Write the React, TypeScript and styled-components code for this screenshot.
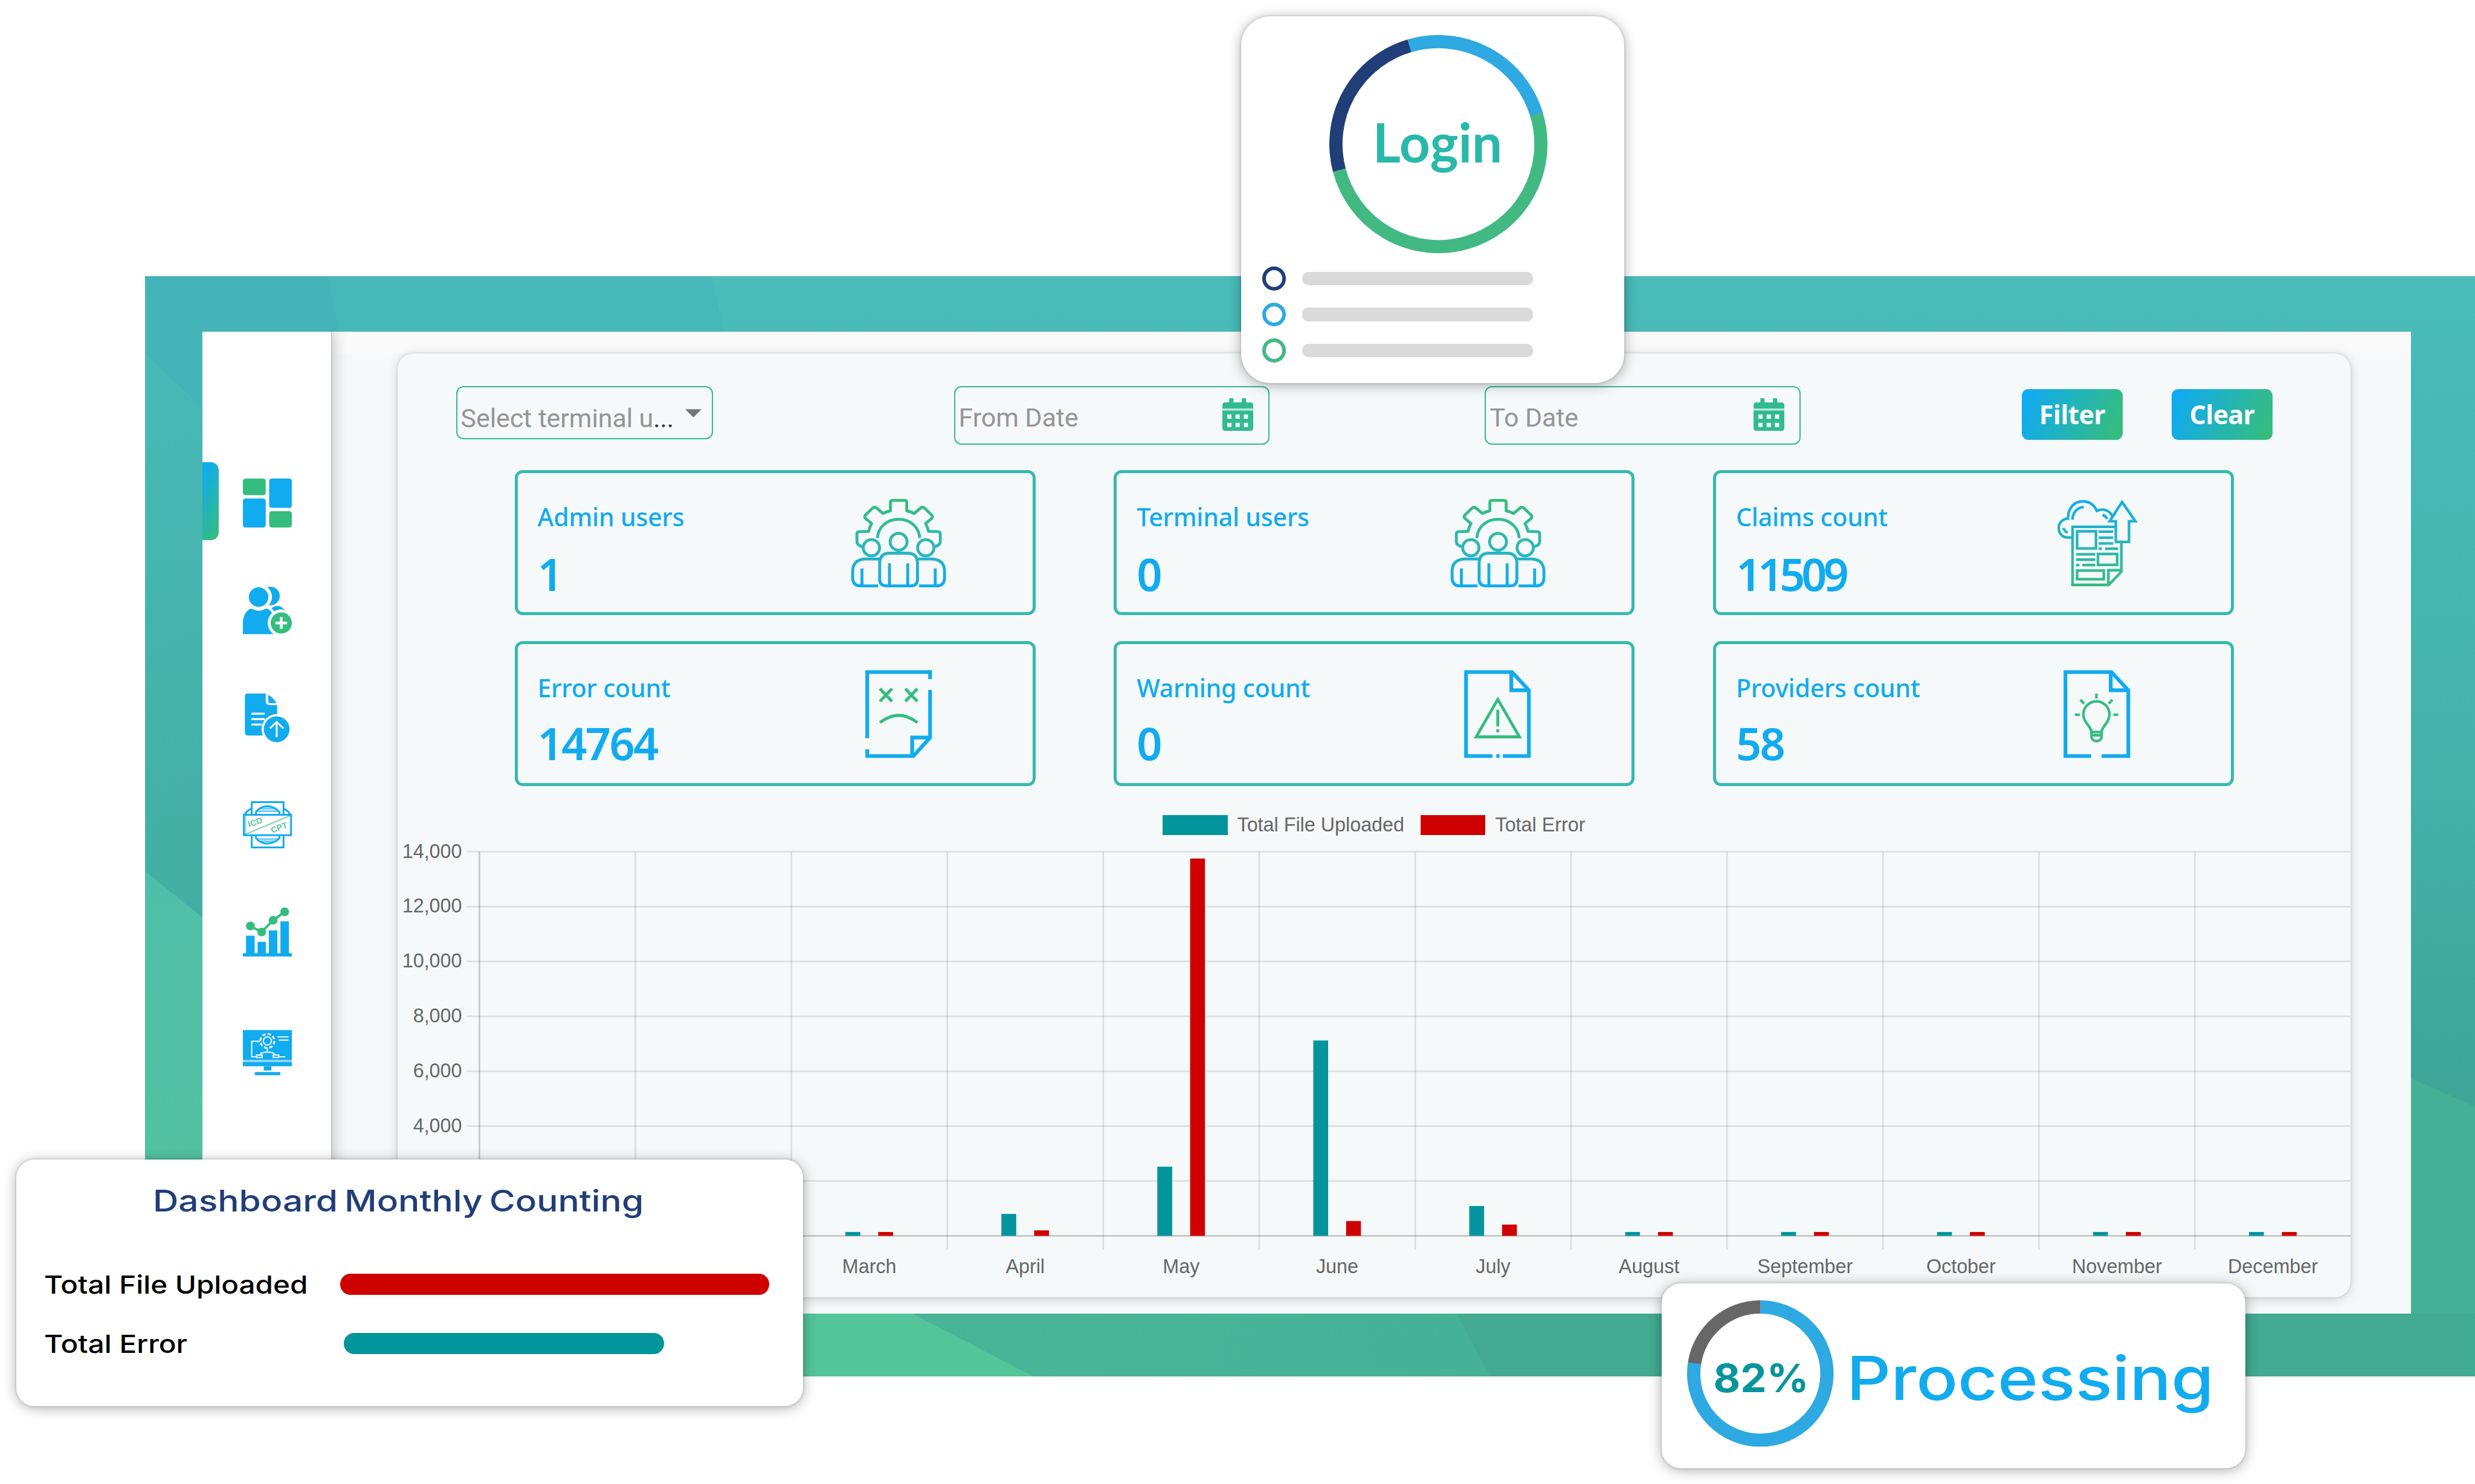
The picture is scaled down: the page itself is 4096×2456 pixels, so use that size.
import React from "react";
import styled, { createGlobalStyle } from "styled-components";

const palette = {
  blue: "#11abef",
  sky: "#2ea9e1",
  navy: "#213e79",
  green: "#35bd80",
  leaf: "#42b983",
  mint: "#30bb90",
  cardLine: "#36b9ae",
  teal: "#03959b",
  red: "#cf0000",
  login: "#29b9aa",
  surface: "#f5f9fa",
  grey: "#dadada",
  chartText: "#666666",
};

const GlobalStyle = createGlobalStyle`
  * {
    box-sizing: border-box;
  }

  body {
    margin: 0;
    background: #ffffff;
  }
`;

const Stage = styled.main`
  position: relative;
  width: 4096px;
  height: 2456px;
  padding: 457px 0 0 240px;
  overflow: hidden;
  background: #ffffff;
`;

const Frame = styled.section`
  position: relative;
  isolation: isolate;
  width: 3856px;
  height: 1821px;
  padding: 92px 106.5px 104px 94.5px;
`;

const FrameArt = styled.svg`
  position: absolute;
  inset: 0;
  width: 100%;
  height: 100%;
`;

const Screen = styled.div`
  position: relative;
  display: flex;
  width: 3655px;
  height: 1625px;
  overflow: hidden;
  background: ${palette.surface};
`;

const Sidebar = styled.nav`
  position: relative;
  z-index: 1;
  display: flex;
  flex-direction: column;
  width: 215.5px;
  height: 100%;
  padding: 216px 0 0;
  background: #ffffff;
  border-right: 2.7px solid #c3c4c5;
  box-shadow: 6px 0 22px rgba(0, 0, 0, 0.17);
`;

const NavItem = styled.a<{ gap?: number }>`
  display: flex;
  align-items: center;
  height: 129px;
  margin-bottom: ${(props) => props.gap ?? 48.6}px;
`;

const ActiveMark = styled.span<{ on?: boolean }>`
  width: 27px;
  height: 129px;
  border-radius: 0 13px 13px 0;
  background: ${(props) =>
    props.on
      ? `linear-gradient(118deg, ${palette.blue} 10%, ${palette.green} 92%)`
      : "transparent"};
`;

const NavIcon = styled.svg`
  width: 81px;
  height: 81px;
  margin: 6px 0 0 40px;
  overflow: visible;
`;

const Main = styled.div`
  width: 3439.5px;
  padding: 36px 0 0 108px;
  background: linear-gradient(#fafafa 36px, ${palette.surface} 36px);
`;

const Panel = styled.div`
  width: 3232px;
  height: 1562px;
  padding-top: 53.5px;
  border-radius: 26px;
  background: ${palette.surface};
  box-shadow: 0 3px 18px rgba(0, 0, 0, 0.17), 0 0 4px rgba(0, 0, 0, 0.14);
`;

const Filters = styled.div`
  display: flex;
  align-items: flex-start;
  height: 97px;
  padding-left: 96.5px;
`;

const Field = styled.div<{ w: number; h: number; gap: number }>`
  display: flex;
  width: ${(props) => props.w}px;
  height: ${(props) => props.h}px;
  margin-right: ${(props) => props.gap}px;
  padding-left: 6px;
  border: 2.7px solid ${palette.mint};
  border-radius: 12px;
  font: 400 43px/50px Roboto, sans-serif;
  letter-spacing: -0.1px;
  color: #959595;
`;

const FieldText = styled.span<{ top: number }>`
  flex: 1;
  padding-top: ${(props) => props.top}px;
  white-space: nowrap;
`;

const Ellipsis = styled.span`
  color: #333333;
`;

const Caret = styled.svg`
  width: 27px;
  height: 14px;
  margin: 36px 17px 0 0;
`;

const CalendarIcon = styled.svg`
  width: 51px;
  height: 54px;
  margin: 18.5px 25px 0 0;
`;

const Button = styled.button<{ gap?: number }>`
  width: 167px;
  height: 83.5px;
  margin: 5.5px ${(props) => props.gap ?? 0}px 0 0;
  padding: 0;
  border: 0;
  border-radius: 11px;
  background: linear-gradient(112deg, ${palette.blue} 8%, ${palette.green} 92%);
  font: 700 43px/82px "Open Sans", sans-serif;
  letter-spacing: -0.7px;
  color: #ffffff;
`;

const Cards = styled.div`
  display: grid;
  grid-template-columns: repeat(3, 862px);
  grid-auto-rows: 240px;
  gap: 43px 129.7px;
  margin: 42.7px 0 0 193.6px;
`;

const Card = styled.article`
  display: flex;
  border: 5.4px solid ${palette.cardLine};
  border-radius: 13px;
  color: ${palette.blue};
  font-family: "Noto Sans", "Open Sans", sans-serif;
`;

const CardText = styled.div`
  width: 552.4px;
  padding: 43.5px 0 0 33px;
`;

const CardLabel = styled.div`
  font-size: 41px;
  font-weight: 500;
  line-height: 56px;
  letter-spacing: -0.2px;
`;

const CardValue = styled.div<{ top: number; tracking?: number }>`
  margin-top: ${(props) => props.top}px;
  font-size: 74px;
  font-weight: 600;
  line-height: 100px;
  letter-spacing: ${(props) => props.tracking ?? -2.7}px;
`;

const CardIcon = styled.div`
  display: flex;
  justify-content: center;
  width: 156px;
  padding-top: 43px;

  svg {
    height: 145.5px;
    overflow: visible;
  }
`;

const Legend = styled.div`
  display: flex;
  align-items: center;
  height: 32.4px;
  margin: 48px 0 0 1266px;
  font: 32.3px/32.4px "Liberation Sans", Arial, sans-serif;
  color: ${palette.chartText};
`;

const Swatch = styled.span<{ color: string }>`
  width: 107.5px;
  height: 32.4px;
  margin-right: 16px;
  background: ${(props) => props.color};
`;

const LegendText = styled.span`
  margin-right: 27px;
`;

const ChartSvg = styled.svg`
  display: block;
  width: 3232px;
  height: 765px;
  font: 32.3px "Liberation Sans", Arial, sans-serif;
`;

const Popup = styled.aside<{
  x: number;
  y: number;
  w: number;
  h: number;
  radius: number;
}>`
  position: absolute;
  left: ${(props) => props.x}px;
  top: ${(props) => props.y}px;
  width: ${(props) => props.w}px;
  height: ${(props) => props.h}px;
  border-radius: ${(props) => props.radius}px;
  background: #ffffff;
  box-shadow: 0 3px 22px rgba(0, 0, 0, 0.32), 0 0 4px rgba(0, 0, 0, 0.2);
`;

const Ring = styled.svg<{ size: number }>`
  display: block;
  width: ${(props) => props.size}px;
  height: ${(props) => props.size}px;
`;

const LoginRing = styled.div`
  padding: 31px 0 0 146px;
`;

const Skeleton = styled.div`
  display: flex;
  align-items: center;
  height: 59.7px;
  padding-left: 34.5px;
`;

const SkeletonList = styled.div`
  margin-top: 12px;
`;

const Dot = styled.span<{ color: string }>`
  width: 39.5px;
  height: 39.5px;
  margin-right: 26.5px;
  border: 6.6px solid ${(props) => props.color};
  border-radius: 50%;
`;

const Line = styled.span`
  width: 382.6px;
  height: 22.4px;
  border-radius: 10px;
  background: ${palette.grey};
`;

// Inter stretched sideways to get the wide look of the popups
const Wide = styled.span<{ stretch: number }>`
  display: inline-block;
  transform: scaleX(${(props) => props.stretch});
  transform-origin: left center;
  white-space: nowrap;
`;

const CountTitle = styled.h2`
  margin: 0;
  padding: 38px 0 0 226px;
  font: 500 50px/60px Inter, sans-serif;
  word-spacing: -4px;
  color: ${palette.navy};
`;

const CountRow = styled.div<{ top: number }>`
  display: flex;
  align-items: center;
  height: 50px;
  margin-top: ${(props) => props.top}px;
  padding-left: 46px;
  font: 500 41px/50px Inter, sans-serif;
  color: #000000;
`;

const CountLabel = styled.span<{ w: number }>`
  width: ${(props) => props.w}px;
`;

const CountBar = styled.span<{ w: number; color: string }>`
  width: ${(props) => props.w}px;
  height: 34.8px;
  border-radius: 17px;
  background: ${(props) => props.color};
`;

const ProcessBody = styled.div`
  display: flex;
  padding: 27.5px 0 0 42px;
`;

const ProcessText = styled.span`
  margin: 69px 0 0 21px;
  font: 500 100px/120px Inter, sans-serif;
  color: ${palette.blue};
`;

const RingText = styled.text`
  text-anchor: middle;
`;

interface Segment {
  from: number;
  to: number;
  color: string;
}

interface DonutProps {
  size: number;
  thickness: number;
  segments: Segment[];
  children?: React.ReactNode;
}

const arcPath = (c: number, r: number, from: number, to: number) => {
  const point = (deg: number) => {
    const a = ((deg - 90) * Math.PI) / 180;
    return `${c + r * Math.cos(a)} ${c + r * Math.sin(a)}`;
  };
  const large = to - from > 180 ? 1 : 0;

  return `M${point(from)} A${r} ${r} 0 ${large} 1 ${point(to)}`;
};

const Donut: React.FC<DonutProps> = ({
  size,
  thickness,
  segments,
  children,
}) => (
  <Ring size={size} viewBox={`0 0 ${size} ${size}`}>
    {segments.map((s) => (
      <path
        key={s.from}
        d={arcPath(size / 2, (size - thickness) / 2, s.from, s.to)}
        fill="none"
        stroke={s.color}
        strokeWidth={thickness}
      />
    ))}
    {children}
  </Ring>
);

const DashboardIcon = () => (
  <NavIcon viewBox="0 0 30 30">
    <rect width="14" height="10.2" rx="1.6" fill={palette.green} />
    <rect x="16.1" width="13.9" height="18" rx="1.6" fill={palette.blue} />
    <rect y="12.2" width="14" height="17.8" rx="1.6" fill={palette.blue} />
    <rect
      x="16.1"
      y="20"
      width="13.9"
      height="10"
      rx="1.6"
      fill={palette.green}
    />
  </NavIcon>
);

const UsersIcon = () => (
  <NavIcon viewBox="0 0 30 30">
    <circle cx="16.9" cy="6.1" r="5.7" fill={palette.blue} />
    <path
      d="M17.5 13.6 Q22 10 26 15 L20 16 Z"
      fill={palette.blue}
    />
    <circle cx="10.2" cy="6.6" r="7.6" fill="#ffffff" />
    <circle cx="9.6" cy="6.7" r="6" fill={palette.blue} />
    <path
      d="M0 29.4 V22.6 C0 18 2 15 5 13.7 Q9.6 16.4 14.4 13.7 C17 14.6 18.5 16.6 19 19 V29.4 Z"
      fill={palette.blue}
    />
    <circle cx="23.5" cy="22.6" r="8.3" fill="#ffffff" />
    <circle cx="23.5" cy="22.6" r="6.5" fill={palette.green} />
    <path d="M23.5 19 V26.2 M19.9 22.6 H27.1" stroke="#ffffff" strokeWidth="1.7" />
  </NavIcon>
);

const UploadIcon = () => (
  <NavIcon viewBox="0 0 30 30">
    <path
      d="M3 .3 H14 V5 Q14 7.4 16.5 7.4 H21 V26 H3 Q1.2 26 1.2 24 V2.2 Q1.2 .3 3 .3 Z"
      fill={palette.blue}
    />
    <path d="M15.5 1 Q18.5 2.6 20.6 6.2 H17 Q15.5 6.2 15.5 4.8 Z" fill={palette.blue} />
    <path
      d="M5.2 12.6 H13.4 M5.2 16 H13.4 M5.2 19.3 H11.5"
      stroke="#ffffff"
      strokeWidth="1.2"
    />
    <circle cx="20.7" cy="22.2" r="9.3" fill="#ffffff" />
    <circle cx="20.7" cy="22.2" r="7.9" fill={palette.blue} />
    <path
      d="M20.7 27 V17.9 M16.6 21.6 L20.7 17.7 L24.8 21.6"
      fill="none"
      stroke="#ffffff"
      strokeWidth="1.1"
    />
  </NavIcon>
);

const CodesIcon = () => (
  <NavIcon viewBox="0 0 30 30">
    <g fill="none" stroke={palette.blue} strokeWidth="1.1">
      <path d="M5.4 9 V.9 H24.9 V9 M5.4 21 V28.7 H24.9 V21" />
      <path d="M1 8.6 Q2.6 6 5.2 5 M25 5 Q27.6 6 29 8.6" />
      <path
        d="M8 8.6 V7 Q10.5 3.6 15 3.4 Q19.5 3.6 22.4 7 V8.6 M8 21.4 V23 Q10.5 26.2 15 26.4 Q19.5 26.2 22.4 23 V21.4"
      />
      <path
        d="M8.6 6.5 H22 M10.4 4.9 H19.6 M8.6 23.6 H22 M10.4 25 H19.6"
        opacity="0.6"
      />
      <rect x=".6" y="8.7" width="28.9" height="12.5" fill="#ffffff" />
      <path d="M1.6 9 V21" opacity="0.4" />
    </g>
    <path d="M1.2 20.8 L29 9.2" stroke={palette.green} strokeWidth="0.7" opacity="0.7" />
    <g
      fill={palette.green}
      opacity="0.8"
      fontFamily="Liberation Sans, Arial, sans-serif"
      fontSize="5.2"
      fontWeight="700"
    >
      <text transform="translate(3.9 16.4) rotate(-20)">ICD</text>
      <text transform="translate(17.9 20) rotate(-20)">CPT</text>
    </g>
  </NavIcon>
);

const ReportIcon = () => (
  <NavIcon viewBox="0 0 30 30">
    <path
      d="M1.9 28 V17.2 H7.2 V28 H9 V21 H14.1 V28 H15.9 V14 H21.1 V28 H23 V8.4 H28.2 V28 H30 V30 H0 V28 Z"
      fill={palette.blue}
    />
    <path
      d="M4.6 11.3 L11.5 15 L18.5 7.8 L25.6 2.6"
      fill="none"
      stroke={palette.green}
      strokeWidth="1.5"
    />
    <g fill={palette.green}>
      <circle cx="4.6" cy="11.3" r="2.7" />
      <circle cx="11.5" cy="15" r="2.7" />
      <circle cx="18.5" cy="7.8" r="2.7" />
      <circle cx="25.6" cy="2.6" r="2.7" />
    </g>
  </NavIcon>
);

const MonitorIcon = () => (
  <NavIcon viewBox="0 0 30 30">
    <rect y="1" width="30" height="18.4" fill={palette.blue} />
    <rect y="19.4" width="30" height="1.2" fill="#8fd6f6" />
    <rect y="20.6" width="30" height="2.6" fill={palette.blue} />
    <circle cx="1.6" cy="21.9" r="0.6" fill={palette.green} />
    <rect x="12.8" y="23.2" width="4.6" height="2.6" fill={palette.blue} />
    <rect x="7.2" y="26.8" width="15.8" height="1.9" rx=".6" fill={palette.blue} />
    <g fill="none" stroke="#ffffff" strokeWidth="0.8" opacity="0.9">
      <circle cx="15" cy="7.7" r="2.5" />
      <circle cx="15" cy="7.7" r="4.3" strokeDasharray="2.1 1.28" strokeWidth="1.2" />
      <path d="M10.4 7.9 H5.4 V17.4 H8" />
      <path d="M15 12 V14.5 M10.2 16.6 Q11 14.5 15 14.5 Q19 14.5 20 16.6 M22.5 17.4 H26" />
      <path d="M21.2 5.2 H28 M22 7.2 H28" />
      <rect x="8.4" y="16.3" width="3.4" height="1.5" />
      <rect x="18.6" y="16.3" width="3.4" height="1.5" />
    </g>
  </NavIcon>
);

const navIcons = [
  { icon: <DashboardIcon />, on: true },
  { icon: <UsersIcon /> },
  { icon: <UploadIcon /> },
  { icon: <CodesIcon /> },
  { icon: <ReportIcon />, gap: 71 },
  { icon: <MonitorIcon /> },
];

const TeamIcon: React.FC<{ id: string }> = ({ id }) => (
  <svg viewBox="0 0 58 54">
    <defs>
      <linearGradient
        id={id}
        gradientUnits="userSpaceOnUse"
        x1="0"
        y1="4"
        x2="0"
        y2="52"
      >
        <stop offset="0" stopColor="#36bd80" />
        <stop offset="0.5" stopColor="#2fb8b4" />
        <stop offset="1" stopColor="#11abef" />
      </linearGradient>
    </defs>
    <g
      fill="none"
      stroke={`url(#${id})`}
      strokeWidth="1.8"
      strokeLinejoin="round"
    >
      <path
        d="M7 29.2 Q3.4 28.6 3.4 26 V21.4 Q3.4 20 5 20 L10.6 19.8 Q11.2 17.2 12.4 15 L8.6 11.8 Q7.8 10.9 8.6 9.8 L13.2 5.4 Q14.4 4.6 15.4 5.4 L19.4 8.8 Q21.6 7.7 24 7.2 V2 Q24 .8 25.2 .8 H32.8 Q34 .8 34 2 V7.2 Q36.4 7.7 38.6 8.8 L42.6 5.4 Q43.6 4.6 44.8 5.4 L49.4 9.8 Q50.2 10.9 49.4 11.8 L45.6 15 Q46.8 17.2 47.4 19.8 L53 20 Q54.6 20 54.6 21.4 V26 Q54.6 28.6 51 29.2"
      />
      <path d="M16 24 C16.4 17 22 12.4 29 12.4 C36 12.4 41.6 17 42 24" />
      <circle cx="29" cy="26.2" r="5.2" />
      <circle cx="12.3" cy="29.9" r="5" />
      <circle cx="45.7" cy="29.9" r="5" />
      <path d="M17.4 39 Q17.6 33.2 23.6 33.2 H34.4 Q40.4 33.2 40.6 39 V49.5 Q40.4 53.3 36.4 53.3 H21.6 Q17.6 53.3 17.4 49.5 Z" />
      <path d="M23.4 39.4 V53.3 M34.6 39.4 V53.3" />
      <path d="M17.8 36.8 H8.4 Q.8 37.2 .8 44.4 V48.4 Q.9 53.3 5.8 53.3 H16.4 M6.5 42.6 V53.3" />
      <path d="M40.2 36.8 H49.6 Q57.2 37.2 57.2 44.4 V48.4 Q57.1 53.3 52.2 53.3 H41.6 M51.5 42.6 V53.3" />
    </g>
  </svg>
);

const ClaimsIcon = () => (
  <svg viewBox="0 0 50 54">
    <defs>
      <linearGradient
        id="claims"
        gradientUnits="userSpaceOnUse"
        x1="0"
        y1="2"
        x2="0"
        y2="53"
      >
        <stop offset="0" stopColor="#11abef" />
        <stop offset="0.55" stopColor="#2bb7b0" />
        <stop offset="1" stopColor="#36bd80" />
      </linearGradient>
    </defs>
    <g fill="none" stroke="url(#claims)" strokeWidth="1.6">
      <path d="M10 23.6 H7 C3.6 23.6 1.5 20.8 1.5 17.7 C1.5 14.4 4.2 12 7.2 12 C7.2 6 10.6 1.4 16.3 1.4 C20.6 1.4 23.6 4 24.9 7.2 C28.6 5.6 33 6.6 34.6 11" />
      <path d="M10 12.6 C10 8.6 12.4 5.2 16.9 4.9 M28.4 9.7 Q30.4 10.4 31.3 12.2 M4.4 17.7 Q5 19.8 7 20.6" />
      <path d="M40.4 1.8 L48.6 13.6 H44.7 V26.3 H36.6 V13.6 H32.8 Z" />
      <path d="M36.6 17 H10 V52.7 H32.2 L40 44.6 V26.3 M32 52.5 V43.7 H40" />
      <rect x="12.8" y="19.8" width="11.6" height="10.5" />
      <rect x="25.6" y="33.7" width="11.8" height="6.7" />
      <rect x="12.8" y="43.9" width="16.4" height="5.3" />
      <path d="M26 20 H35 M26 23.7 H35 M26 27.2 H35 M26 30.5 H28 M30 30.5 H38" />
      <path d="M12.2 33.9 H24 M12.2 37.2 H24 M12.2 40.5 H14.2 M16 40.5 H24" />
    </g>
  </svg>
);

const ErrorIcon = () => (
  <svg viewBox="0 0 41 54">
    <g fill="none" stroke={palette.blue} strokeWidth="2.3">
      <path d="M39.8 5.6 V1.2 H1.2 V41.8 M1.2 48.6 V52.8 H29.6 L39.8 41.4 V12.2" />
      <path d="M28.8 52 V41.4 H39.8" />
    </g>
    <g fill="none" stroke={palette.green} strokeWidth="1.9">
      <path d="M9 11.4 L16.4 19.2 M16.4 11.4 L9 19.2 M24.6 11.4 L32 19.2 M32 11.4 L24.6 19.2" />
      <path d="M9 32.2 Q20.5 23.4 32 32.2" />
    </g>
  </svg>
);

const WarningIcon = () => (
  <svg viewBox="0 0 41 54">
    <g fill="none" stroke={palette.blue} strokeWidth="2.3">
      <path d="M17.4 52.8 H1.2 V1.2 H29.4 L39.8 12.4 V52.8 H23.8 M19.8 52.8 H21.8" />
      <path d="M29 1.6 V12.4 H39.8" />
    </g>
    <g fill="none" stroke={palette.green} strokeWidth="1.8">
      <path d="M20.7 18 L34 41 H7.4 Z M20.7 24.4 V34.6 M20.7 36.4 V38.2" />
    </g>
  </svg>
);

const ProvidersIcon = () => (
  <svg viewBox="0 0 41 54">
    <g fill="none" stroke={palette.blue} strokeWidth="2.3">
      <path d="M17 52.8 H1.2 V1.2 H29.4 L39.8 12.4 V52.8 H23.4" />
      <path d="M29 1.6 V12.4 H39.8" />
    </g>
    <g fill="none" stroke={palette.green} strokeWidth="1.6">
      <path d="M17.2 38 C17 34.4 12.2 32.4 12.2 27.2 A8 8 0 0 1 28.2 27.2 C28.2 32.4 23.6 34.4 23.4 38 Z" />
      <path d="M17.2 38 V41 Q17.6 43.6 20.3 43.6 Q23 43.6 23.4 41 V38 M17.2 40 H23.4" />
      <path d="M20.2 14.4 V17.4 M7 27.4 H10 M30.6 27.4 H33.6 M10.4 18.2 L12.6 20.6 M30 18.2 L27.8 20.6" />
    </g>
  </svg>
);

const cards = [
  { label: "Admin users", value: "1", icon: <TeamIcon id="admin" /> },
  { label: "Terminal users", value: "0", icon: <TeamIcon id="terminal" /> },
  {
    label: "Claims count",
    value: "11509",
    tracking: -6.2,
    icon: <ClaimsIcon />,
  },
  { label: "Error count", value: "14764", icon: <ErrorIcon /> },
  { label: "Warning count", value: "0", icon: <WarningIcon /> },
  { label: "Providers count", value: "58", icon: <ProvidersIcon /> },
];

// the first two months sit under the counting popup and carry no label
const months = [
  { files: 120, errors: 120 },
  { files: 120, errors: 120 },
  { name: "March", files: 140, errors: 140 },
  { name: "April", files: 800, errors: 200 },
  { name: "May", files: 2520, errors: 13750 },
  { name: "June", files: 7120, errors: 540 },
  { name: "July", files: 1085, errors: 410 },
  { name: "August", files: 140, errors: 140 },
  { name: "September", files: 140, errors: 140 },
  { name: "October", files: 140, errors: 140 },
  { name: "November", files: 140, errors: 140 },
  { name: "December", files: 140, errors: 140 },
];

const ticks = [14000, 12000, 10000, 8000, 6000, 4000, 2000, 0];
const lowestLabel = 4000;

// plot area, measured inside the chart svg
const plot = { left: 135.4, top: 27.5, bottom: 663.3, column: 258.1 };
const perUnit = (plot.bottom - plot.top) / 14000;

const Chart: React.FC = () => (
  <ChartSvg viewBox="0 0 3232 765">
    {ticks.map((tick) => {
      const y = plot.bottom - tick * perUnit;

      return (
        <g key={tick}>
          <path
            d={`M114.6 ${y} H3232`}
            stroke="#000000"
            strokeOpacity={tick === 0 ? 0.2 : 0.1}
            strokeWidth="2.7"
          />
          {tick >= lowestLabel && (
            <text
              x="106.5"
              y={y + 10}
              textAnchor="end"
              fill={palette.chartText}
            >
              {tick.toLocaleString("en-US")}
            </text>
          )}
        </g>
      );
    })}
    {months.map((month, i) => {
      const x = plot.left + i * plot.column;
      const files = month.files * perUnit;
      const errors = month.errors * perUnit;

      return (
        <g key={i}>
          <path
            d={`M${x} ${plot.top} V686`}
            stroke="#000000"
            strokeOpacity={i === 0 ? 0.2 : 0.1}
            strokeWidth="2.7"
          />
          <rect
            x={x + 89.5}
            y={plot.bottom - files}
            width="24.6"
            height={files}
            fill={palette.teal}
          />
          <rect
            x={x + 143.8}
            y={plot.bottom - errors}
            width="24.6"
            height={errors}
            fill={palette.red}
          />
          {month.name && (
            <text
              x={x + plot.column / 2}
              y="725"
              textAnchor="middle"
              fill={palette.chartText}
            >
              {month.name}
            </text>
          )}
        </g>
      );
    })}
  </ChartSvg>
);

const Calendar = () => (
  <CalendarIcon viewBox="0 0 19 20" preserveAspectRatio="none">
    <path
      fillRule="evenodd"
      fill={palette.mint}
      d="M4.2 2.6 V.4 Q4.2 0 4.6 0 H6.4 Q6.8 0 6.8 .4 V2.6 H12 V.4 Q12 0 12.4 0 H14.2 Q14.6 0 14.6 .4 V2.6 H17.2 Q19 2.6 19 4.4 V6.3 H0 V4.4 Q0 2.6 1.8 2.6 Z M0 7.6 H19 V18.2 Q19 20 17.2 20 H1.8 Q0 20 0 18.2 Z M3 10 V12.6 H5.6 V10 Z M8.1 10 V12.6 H10.7 V10 Z M13.2 10 V12.6 H15.8 V10 Z M3 15.1 V17.7 H5.6 V15.1 Z M8.1 15.1 V17.7 H10.7 V15.1 Z M13.2 15.1 V17.7 H15.8 V15.1 Z"
    />
    <rect y="6.3" width="19" height="1.3" fill={palette.mint} opacity="0.3" />
  </CalendarIcon>
);

// faceted teal backdrop of the monitor frame
const Backdrop = () => (
  <FrameArt viewBox="92 175 1476 697" preserveAspectRatio="none">
    <defs>
      <linearGradient id="base" x1="0" y1="0" x2="0" y2="1">
        <stop offset="0" stopColor="#4abcba" />
        <stop offset="0.45" stopColor="#45b2aa" />
        <stop offset="0.74" stopColor="#3ea597" />
        <stop offset="1" stopColor="#42ab91" />
      </linearGradient>
      <linearGradient id="side" x1="0" y1="0" x2="0" y2="1">
        <stop offset="0" stopColor="#48b9b8" />
        <stop offset="0.6" stopColor="#45b2a9" />
        <stop offset="1" stopColor="#43afa1" />
      </linearGradient>
      <linearGradient id="meadow" x1="0" y1="0" x2="0" y2="1">
        <stop offset="0" stopColor="#50bfaa" />
        <stop offset="1" stopColor="#54c498" />
      </linearGradient>
      <linearGradient id="low" x1="0" y1="0" x2="1" y2="0">
        <stop offset="0" stopColor="#49b596" />
        <stop offset="1" stopColor="#46b295" />
      </linearGradient>
    </defs>
    <rect x="92" y="175" width="1476" height="697" fill="url(#base)" />
    <path d="M92 223 L140 270 V600 L92 560 Z" fill="url(#side)" />
    <path d="M92 175 H451 L460 215 H128 V258.5 L92 223.5 Z" fill="#47b8b9" />
    <path d="M92 175 H208 L216 215 H128 V258.5 L92 223.5 Z" fill="#45b4b9" />
    <path d="M92 552 L128 581 L640 872 H92 Z" fill="url(#meadow)" />
    <path d="M500 832 H578 L655 872 H500 Z" fill="#54c49a" />
    <path d="M578 832 H923 L944 872 H655 Z" fill="url(#low)" />
    <path d="M1527 683 L1568 701 V872 H1527 Z" fill="#45b096" />
    <path d="M923 832 H1568 V872 H944 Z" fill="#42ab91" />
  </FrameArt>
);

const App: React.FC = () => (
  <>
    <GlobalStyle />
    <Stage>
      <Frame>
        <Backdrop />
        <Screen>
          <Sidebar>
            {navIcons.map((item, i) => (
              <NavItem key={i} gap={item.gap}>
                <ActiveMark on={item.on} />
                {item.icon}
              </NavItem>
            ))}
          </Sidebar>
          <Main>
            <Panel>
              <Filters>
                <Field w={425.5} h={88.5} gap={398.6}>
                  <FieldText top={26.5}>
                    Select terminal u<Ellipsis>...</Ellipsis>
                  </FieldText>
                  <Caret viewBox="0 0 10 5">
                    <path d="M0 0 H10 L5 5 Z" fill="#757575" />
                  </Caret>
                </Field>
                <Field w={522.5} h={97} gap={356.4}>
                  <FieldText top={25}>From Date</FieldText>
                  <Calendar />
                </Field>
                <Field w={522.5} h={97} gap={366}>
                  <FieldText top={25}>To Date</FieldText>
                  <Calendar />
                </Field>
                <Button gap={81}>Filter</Button>
                <Button>Clear</Button>
              </Filters>
              <Cards>
                {cards.map((card, i) => (
                  <Card key={card.label}>
                    <CardText>
                      <CardLabel>{card.label}</CardLabel>
                      <CardValue top={i < 3 ? 17 : 14} tracking={card.tracking}>
                        {card.value}
                      </CardValue>
                    </CardText>
                    <CardIcon>{card.icon}</CardIcon>
                  </Card>
                ))}
              </Cards>
              <Legend>
                <Swatch color={palette.teal} />
                <LegendText>Total File Uploaded</LegendText>
                <Swatch color={palette.red} />
                <LegendText>Total Error</LegendText>
              </Legend>
              <Chart />
            </Panel>
          </Main>
        </Screen>
      </Frame>

      <Popup x={2054} y={27} w={634} h={606.8} radius={48}>
        <LoginRing>
          <Donut
            size={361}
            thickness={21.8}
            segments={[
              { from: 255, to: 344, color: palette.navy },
              { from: 343.5, to: 433.5, color: palette.sky },
              { from: 73, to: 255.3, color: palette.leaf },
            ]}
          >
            <RingText
              x="179"
              y="211"
              fill={palette.login}
              fontFamily="Lato, sans-serif"
              fontSize="89"
              fontWeight="700"
            >
              Login
            </RingText>
          </Donut>
        </LoginRing>
        <SkeletonList>
          {[palette.navy, palette.sky, palette.leaf].map((color) => (
            <Skeleton key={color}>
              <Dot color={color} />
              <Line />
            </Skeleton>
          ))}
        </SkeletonList>
      </Popup>

      <Popup x={26.7} y={1918.6} w={1302} h={408} radius={30}>
        <CountTitle>
          <Wide stretch={1.174}>Dashboard Monthly Counting</Wide>
        </CountTitle>
        <CountRow top={84}>
          <CountLabel w={490.5}>
            <Wide stretch={1.16}>Total File Uploaded</Wide>
          </CountLabel>
          <CountBar w={709.4} color={palette.red} />
        </CountRow>
        <CountRow top={48}>
          <CountLabel w={496.8}>
            <Wide stretch={1.163}>Total Error</Wide>
          </CountLabel>
          <CountBar w={530} color={palette.teal} />
        </CountRow>
      </Popup>

      <Popup x={2750.4} y={2124.3} w={965.8} h={305.3} radius={32}>
        <ProcessBody>
          <Donut
            size={242.5}
            thickness={22}
            segments={[
              { from: 0, to: 279, color: palette.sky },
              { from: 278.8, to: 360, color: "#676767" },
            ]}
          >
            <RingText
              transform="translate(122.5 152) scale(1.06 1)"
              fill={palette.teal}
              fontFamily="Inter, sans-serif"
              fontSize="65"
              fontWeight="700"
            >
              82%
            </RingText>
          </Donut>
          <ProcessText>
            <Wide stretch={1.141}>Processing</Wide>
          </ProcessText>
        </ProcessBody>
      </Popup>
    </Stage>
  </>
);

export default App;
